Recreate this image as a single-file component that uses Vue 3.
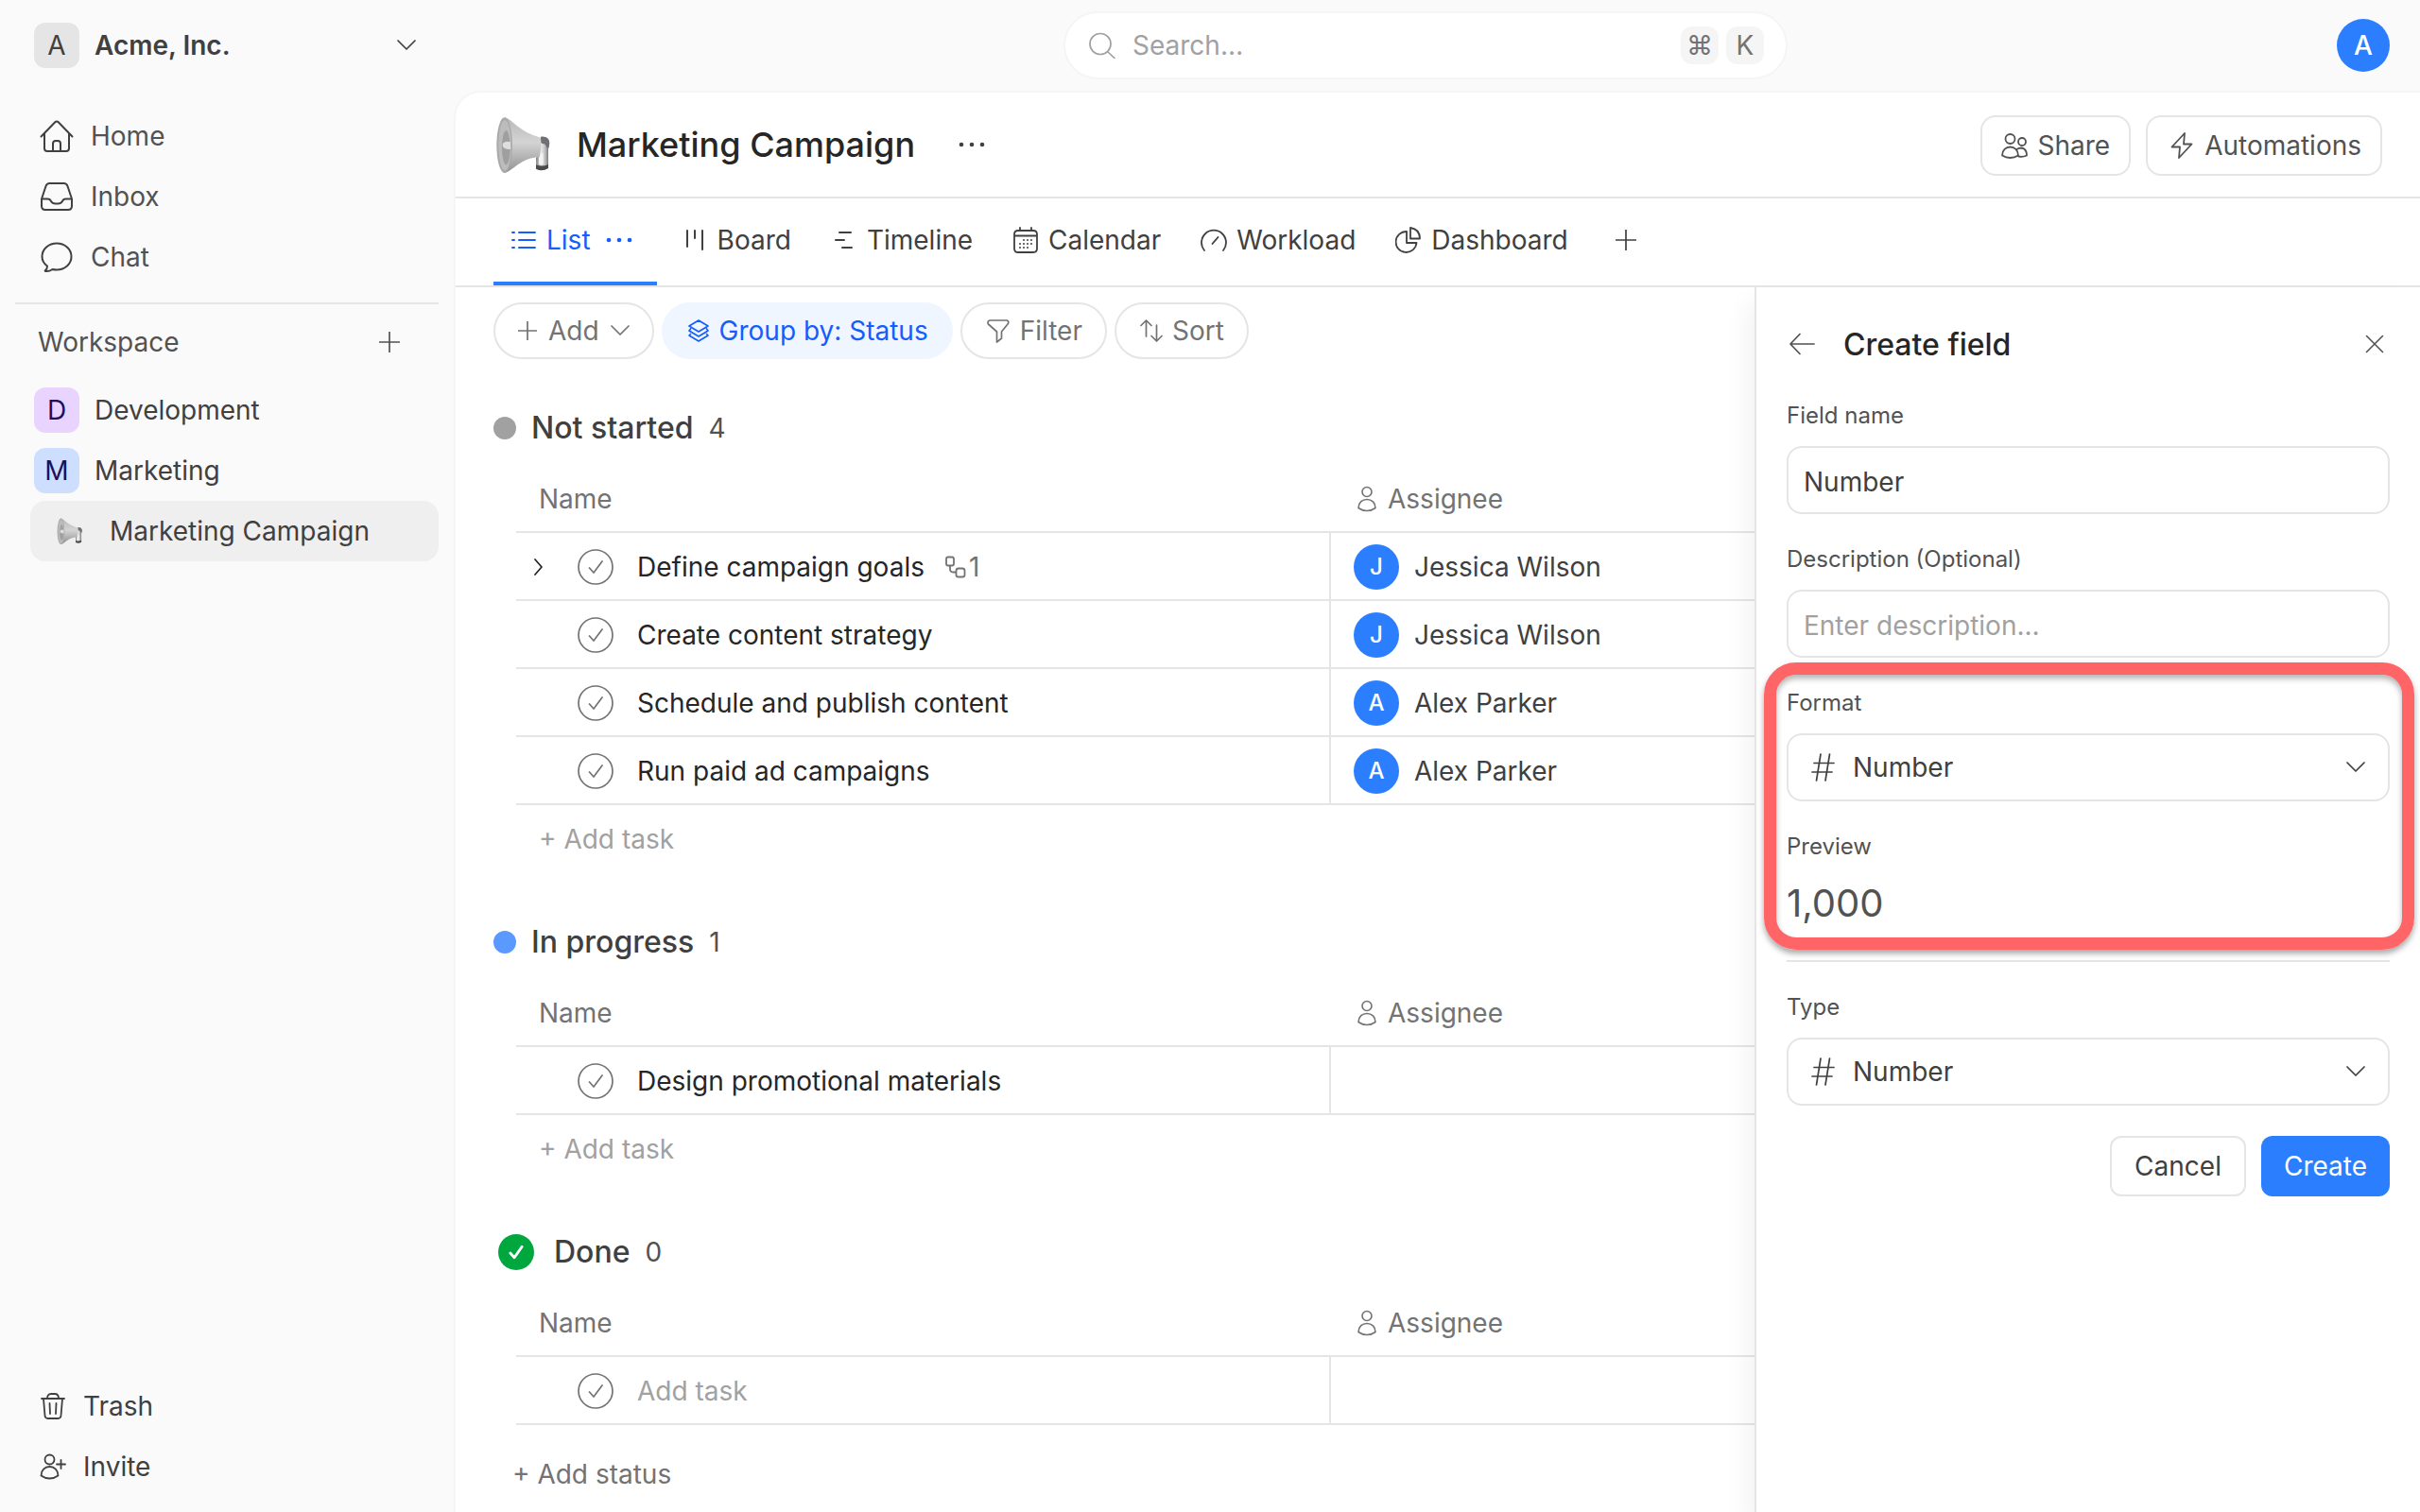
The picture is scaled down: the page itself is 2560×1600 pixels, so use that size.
<script setup>
import { h, ref } from 'vue'

const shapes = {
  home: [36, 36, 'M1.5 18.5 16 3.5q2-2 4 0l14.5 15M5 15.5V31q0 3 3 3h20q3 0 3-3V15.5M14 34v-8a3 3 0 0 1 3-3h2a3 3 0 0 1 3 3v8'],
  inbox: [36, 36, 'M2 20.5 6.5 7Q7.500 4 10.500 4h15q3 0 4 3L34 20.500V28q0 4-4 4H6q-4 0-4-4ZM2 20.500h6.500q2.500 0 3.500 2.500 1.500 2.500 4.500 2.500h3q3 0 4.500-2.500 1-2.500 3.500-2.500H34'],
  chat: [36, 36, 'M8 27.500C4.500 25 2.500 21.500 2.500 17.500 2.500 9.500 9.500 3.500 18 3.500s15.500 6 15.500 14-7 14-15.500 14q-2.500 0-4.500-.5-3.500 2.500-7.500 2-.7-.3 0-1 2-1.500 2-4.500Z'],
  chevron: [20, 12, 'm1 1 9 9 9-9', 1.7],
  chevronRight: [12, 20, 'm2 2 7 8-7 8', 1.8],
  plus: [22, 22, 'M11 0v22M0 11h22', 1.7],
  plusSmall: [20, 20, 'M10 0v20M0 10h20', 1.7],
  trash: [28, 28, 'M2 6h24M8 6q0-5 4-5h4q4 0 4 5M4 6l1.500 18q.3 3 3 3h11q2.700 0 3-3L24 6M10.500 11l.5 11M17.500 11l-.5 11', 1.8],
  invite: [28, 28, 'M15.500 6.500a5 5 0 1 1-10 0 5 5 0 0 1 10 0ZM1.500 23.500C1.500 18 5.500 14 10.500 14s9 4 9 9.500q-4 3-9 3t-9-3ZM18 11.500h9M22.500 7v9', 1.8],
  person: [20, 28, 'M15 6.500a5 5 0 1 1-10 0 5 5 0 0 1 10 0ZM1 23.500C1 18 5 14.500 10 14.500s9 3.500 9 9q-4 3-9 3t-9-3Z', 1.6],
  people: [28, 28, 'M14.500 7a5 5 0 1 1-10 0 5 5 0 0 1 10 0ZM1 24.500C1 19 5 15.500 9.500 15.500s8.500 3.500 8.500 9Q14 27 9.500 27T1 24.500ZM26 10a4 4 0 1 1-8 0 4 4 0 0 1 8 0ZM16.500 18q2-1.500 5-1.500 5.500 1 5.500 8-4 2-8.500 1', 1.8],
  bolt: [24, 28, 'M15 1 1.500 15.500H10L9 27l13.500-14.500H14Z', 1.8],
  list: [26, 20, 'M1 2h2M1 10h2M1 18h2M8 2h17M8 10h17M8 18h17'],
  board: [20, 22, 'M2 1v17M10 1v8M18 1v20'],
  timeline: [20, 20, 'M5 2h12M1 10h9M8 18h10'],
  calendar: [26, 28, 'M5 4h16q4 0 4 4v15q0 4-4 4H5q-4 0-4-4V8q0-4 4-4ZM1 9.500h24M7 1v3M19 1v3', 1.8],
  gauge: [28, 26, 'M4 24A13 13 0 1 1 24 24M12.500 17l6-7', 1.8],
  pie: [26, 28, 'M11 5A11 11 0 1 0 21.500 17H11ZM15 1v11.500h10Q25 2.500 15 1Z', 1.8],
  layers: [24, 24, 'M12 1 2 7l10 6 10-6ZM3.500 10 2 12l10 6 10-6-1.500-2M3.500 15.500 2 17l10 6 10-6-1.500-1.500', 1.7],
  filter: [30, 26, 'M6 2h18q3 1 1 4l-6.500 8v7l-5 4V14L4.500 6Q3 3 6 2Z', 1.7],
  sort: [24, 26, 'M6.500 19V2M1 7.500 6.500 2 12 7.500M17.500 7v17M12 18.500l5.500 5.500L23 18.500', 1.7],
  search: [28, 28, 'M23 12.500a11 11 0 1 1-22 0 11 11 0 0 1 22 0ZM19.500 20.500 27 27.500', 1.7],
  dots: [28, 6, ''],
  subtask: [22, 24, 'M3 1.500h4q2 0 2 2v5q0 2-2 2H3q-2 0-2-2v-5q0-2 2-2ZM14 13.500h4q2.500 0 2.500 2.500v4.500q0 2-2.500 2h-4q-2.500 0-2.500-2V16q0-2.500 2.500-2.500ZM5 10.500V14q0 3.500 3.500 3.500h3', 1.8],
  back: [30, 24, 'M29 12H4M14 1.500 4 12l10 10.500', 1.7],
  close: [20, 20, 'm1.500 1.500 17 17M18.500 1.500l-17 17', 1.6],
  hash: [26, 30, 'M3 10.500h21M1 20h21M10 1 5.500 29M19.500 1 15 29', 1.7],
  check: [38, 38, 'M37 19a18 18 0 1 1-36 0 18 18 0 0 1 36 0ZM12.500 20l4.500 5 9-12', 1.7]
}

const calendarDots = [[12, 14], [16, 14], [20, 14], [8, 18], [12, 18], [16, 18], [20, 18], [8, 22], [12, 22], [16, 22]]

const Icon = (props) => {
  const [w, ht, d, stroke = 2] = shapes[props.name]
  const circle = (cx, cy, r) => h('circle', { cx, cy, r, fill: 'currentColor', stroke: 'none' })
  const kids = props.name === 'dots'
    ? [3, 14, 25].map((cx) => circle(cx, 3, 2.3))
    : [h('path', { d })]
  if (props.name === 'calendar') kids.push(...calendarDots.map(([x, y]) => circle(x - 1, y, 1)))
  return h('svg', {
    width: w, height: ht, viewBox: `0 0 ${w} ${ht}`, fill: 'none', stroke: 'currentColor',
    'stroke-width': stroke, 'stroke-linejoin': 'round', 'stroke-linecap': 'round', 'aria-hidden': 'true'
  }, kids)
}
Icon.props = ['name']

const Megaphone = (props) => h('svg', { width: props.size, height: props.size, viewBox: '18 32 180 180', 'aria-hidden': 'true' }, [
  h('defs', null, [
    h('linearGradient', { id: 'horn' + props.size, x1: 0, y1: 0, x2: 0, y2: 1 }, [
      h('stop', { offset: 0, 'stop-color': '#b8b8b8' }),
      h('stop', { offset: 0.45, 'stop-color': '#d4d4d4' }),
      h('stop', { offset: 1, 'stop-color': '#909090' })
    ]),
    h('linearGradient', { id: 'grip' + props.size, x1: 0, y1: 0, x2: 1, y2: 0 }, [
      h('stop', { offset: 0, 'stop-color': '#77777b' }),
      h('stop', { offset: 0.35, 'stop-color': '#ededed' }),
      h('stop', { offset: 0.65, 'stop-color': '#c4c4c6' }),
      h('stop', { offset: 1, 'stop-color': '#66666a' })
    ])
  ]),
  h('path', { d: 'M168 98q24-4 27 14 2 14-3 24v60q-18 12-38 2l-1-34 15-14Z', fill: `url(#grip${props.size})` }),
  h('path', { d: 'M153 186q20 8 39-1v12q-20 12-39 2Z', fill: '#4a4a4d' }),
  h('path', { d: 'M162 150h14v34h-14Z', fill: '#f2f2f2' }),
  h('path', { d: 'M168 97q25-3 28 20-1 12-6 18l-8-14-14-4Z', fill: '#6f6f74' }),
  h('path', { d: 'M54 36c22 4 44 46 114 64q4 28-4 62c-60 2-84 44-110 50Z', fill: `url(#horn${props.size})` }),
  h('ellipse', { cx: 53, cy: 124, rx: 25, ry: 88, fill: '#a9a9a9' }),
  h('ellipse', { cx: 54, cy: 124, rx: 20, ry: 80, fill: '#bcbcbc' }),
  h('ellipse', { cx: 58, cy: 132, rx: 13, ry: 54, fill: '#9f9f9f' }),
  h('path', { d: 'M50 116q12-6 22-2v22q-10 4-22-4-6-8 0-16Z', fill: '#dedede' })
])
Megaphone.props = ['size']

const nav = [
  { icon: 'home', label: 'Home' },
  { icon: 'inbox', label: 'Inbox' },
  { icon: 'chat', label: 'Chat' }
]
const footer = [
  { icon: 'trash', label: 'Trash' },
  { icon: 'invite', label: 'Invite' }
]
const tabs = [
  { icon: 'list', label: 'List', active: true },
  { icon: 'board', label: 'Board' },
  { icon: 'timeline', label: 'Timeline' },
  { icon: 'calendar', label: 'Calendar' },
  { icon: 'gauge', label: 'Workload' },
  { icon: 'pie', label: 'Dashboard' }
]
const groups = [
  {
    name: 'Not started', tone: 'grey', tasks: [
      { title: 'Define campaign goals', who: 'Jessica Wilson', subtasks: 1 },
      { title: 'Create content strategy', who: 'Jessica Wilson' },
      { title: 'Schedule and publish content', who: 'Alex Parker' },
      { title: 'Run paid ad campaigns', who: 'Alex Parker' }
    ]
  },
  { name: 'In progress', tone: 'blue', tasks: [{ title: 'Design promotional materials' }] },
  { name: 'Done', tone: 'done', tasks: [] }
]

const fieldName = ref('Number')
const description = ref('')
const format = ref('Number')
const type = ref('Number')
</script>

<template>
  <div class="app">
    <aside class="sidebar">
      <button class="switcher" type="button">
        <span class="badge badge-grey">A</span>
        <span class="org">Acme, Inc.</span>
        <Icon name="chevron" />
      </button>

      <nav class="nav" aria-label="Main">
        <a v-for="n in nav" :key="n.label" href="#" class="nav-link">
          <Icon :name="n.icon" />{{ n.label }}
        </a>
      </nav>

      <div class="workspace-head">
        <span>Workspace</span>
        <button type="button" class="icon-btn" aria-label="Add workspace"><Icon name="plus" /></button>
      </div>
      <nav aria-label="Workspace">
        <a href="#" class="space"><span class="badge badge-purple">D</span>Development</a>
        <a href="#" class="space"><span class="badge badge-blue">M</span>Marketing</a>
        <a href="#" class="space-item"><Megaphone :size="28" />Marketing Campaign</a>
      </nav>

      <nav class="sidebar-foot" aria-label="Account">
        <a v-for="f in footer" :key="f.label" href="#" class="foot-link">
          <Icon :name="f.icon" />{{ f.label }}
        </a>
      </nav>
    </aside>

    <div class="content">
      <header class="topbar">
        <label class="search">
          <Icon name="search" />
          <input type="text" placeholder="Search…" aria-label="Search" />
          <kbd>⌘</kbd><kbd>K</kbd>
        </label>
        <button type="button" class="avatar avatar-lg" aria-label="Account A">A</button>
      </header>

      <main class="main">
        <div class="titlebar">
          <Megaphone :size="60" />
          <h1>Marketing Campaign</h1>
          <button type="button" class="icon-btn" aria-label="More"><Icon name="dots" /></button>
          <div class="title-actions">
            <button type="button" class="btn"><Icon name="people" />Share</button>
            <button type="button" class="btn btn-wide"><Icon name="bolt" />Automations</button>
          </div>
        </div>

        <nav class="tabs" aria-label="Views">
          <a v-for="t in tabs" :key="t.label" href="#" class="tab" :class="{ active: t.active }">
            <Icon :name="t.icon" class="tab-icon" /><span>{{ t.label }}</span>
            <Icon v-if="t.active" name="dots" class="tab-more" />
          </a>
          <button type="button" class="icon-btn tab-add" aria-label="Add view"><Icon name="plus" /></button>
        </nav>

        <div class="body">
          <section class="list">
            <div class="toolbar">
              <button type="button" class="pill pill-add"><Icon name="plusSmall" />Add<Icon name="chevron" /></button>
              <button type="button" class="pill pill-active"><Icon name="layers" class="pill-icon" />Group by: Status</button>
              <button type="button" class="pill"><Icon name="filter" class="pill-icon" />Filter</button>
              <button type="button" class="pill"><Icon name="sort" class="pill-icon" />Sort</button>
            </div>

            <section v-for="g in groups" :key="g.name" class="group">
              <div class="group-head">
                <span v-if="g.tone !== 'done'" class="dot" :class="g.tone"></span>
                <svg v-else class="done-mark" width="38" height="38" viewBox="0 0 40 40" aria-hidden="true">
                  <circle cx="20" cy="20" r="20" fill="#00a63e" />
                  <path d="m13.500 21 4.500 5 8.500-12" fill="none" stroke="#fff" stroke-width="3" stroke-linecap="round" stroke-linejoin="round" />
                </svg>
                <h2>{{ g.name }}</h2>
                <span class="count">{{ g.tasks.length }}</span>
              </div>
              <table class="tasks">
                <colgroup><col class="col-name" /><col /></colgroup>
                <thead>
                  <tr>
                    <th scope="col">Name</th>
                    <th scope="col" class="th-assignee"><div class="th-in"><Icon name="person" />Assignee</div></th>
                  </tr>
                </thead>
                <tbody>
                  <tr v-for="t in g.tasks" :key="t.title">
                    <td>
                      <div class="task">
                        <button type="button" class="expand" :disabled="!t.subtasks" aria-label="Expand">
                          <Icon v-if="t.subtasks" name="chevronRight" />
                        </button>
                        <button type="button" class="check" aria-label="Complete task"><Icon name="check" /></button>
                        <span>{{ t.title }}</span>
                        <span v-if="t.subtasks" class="subtasks"><Icon name="subtask" />{{ t.subtasks }}</span>
                      </div>
                    </td>
                    <td class="who">
                      <div v-if="t.who" class="person"><span class="avatar">{{ t.who[0] }}</span>{{ t.who }}</div>
                    </td>
                  </tr>
                  <tr v-if="!g.tasks.length">
                    <td>
                      <div class="task">
                        <span class="expand"></span>
                        <button type="button" class="check" aria-label="Complete task"><Icon name="check" /></button>
                        <input type="text" class="new-task" placeholder="Add task" aria-label="Task name" />
                      </div>
                    </td>
                    <td class="who"></td>
                  </tr>
                </tbody>
              </table>
              <button v-if="g.tasks.length" type="button" class="add-task">+ Add task</button>
            </section>
            <button type="button" class="add-status">+ Add status</button>
          </section>

          <form class="panel" @submit.prevent>
            <div class="panel-head">
              <button type="button" class="icon-btn" aria-label="Back"><Icon name="back" /></button>
              <h2>Create field</h2>
              <button type="button" class="icon-btn panel-close" aria-label="Close"><Icon name="close" /></button>
            </div>

            <div class="field">
              <label for="field-name">Field name</label>
              <input id="field-name" v-model="fieldName" type="text" class="control" />
            </div>
            <div class="field">
              <label for="field-desc">Description (Optional)</label>
              <input id="field-desc" v-model="description" type="text" class="control" placeholder="Enter description..." />
            </div>

            <div class="highlight">
              <div class="field">
                <label for="field-format">Format</label>
                <div class="select">
                  <Icon name="hash" class="select-icon" />
                  <select id="field-format" v-model="format" class="control"><option>Number</option></select>
                  <Icon name="chevron" class="select-arrow" />
                </div>
              </div>
              <div class="preview">
                <span class="label">Preview</span>
                <output for="field-format">1,000</output>
              </div>
            </div>

            <div class="field field-type">
              <label for="field-type">Type</label>
              <div class="select">
                <Icon name="hash" class="select-icon" />
                <select id="field-type" v-model="type" class="control"><option>Number</option></select>
                <Icon name="chevron" class="select-arrow" />
              </div>
            </div>

            <div class="panel-actions">
              <button type="button" class="action">Cancel</button>
              <button type="submit" class="action action-primary">Create</button>
            </div>
          </form>
        </div>
      </main>
    </div>
  </div>
</template>

<style>
body {
  background: #fafafa;
}
</style>

<style scoped>
.app,
.app * {
  box-sizing: border-box;
}
.app {
  display: flex;
  min-height: 100vh;
  background: #fafafa;
  color: #404040;
  font: 400 28px/40px Inter, "Liberation Sans", sans-serif;
  font-optical-sizing: none;
}
svg {
  display: block;
  flex: none;
}
a {
  color: inherit;
  text-decoration: none;
}
button,
input,
select {
  margin: 0;
  padding: 0;
  border: 0;
  background: none;
  color: inherit;
  font: inherit;
  font-optical-sizing: none;
  outline: 0;
}
button {
  cursor: pointer;
}
h1,
h2 {
  margin: 0;
  font-weight: 500;
}
.icon-btn {
  display: flex;
  align-items: center;
}

/* Sidebar */
.sidebar {
  display: flex;
  flex: none;
  flex-direction: column;
  width: 480px;
  padding-bottom: 16px;
}
.switcher {
  display: flex;
  align-items: center;
  height: 96px;
  padding: 0 40px 0 36px;
  gap: 16px;
}
.org {
  flex: 1;
  font-weight: 600;
  text-align: left;
}
.badge {
  display: grid;
  flex: none;
  place-items: center;
  width: 48px;
  height: 48px;
  border-radius: 12px;
  color: #1e0f5c;
}
.badge-grey {
  background: #e5e5e5;
  color: #404040;
}
.badge-purple {
  background: #e9d4ff;
}
.badge-blue {
  background: #cddeff;
}
.nav {
  margin: 0 16px;
  padding: 16px 0;
  border-bottom: 2px solid #e5e5e5;
}
.nav-link {
  display: flex;
  align-items: center;
  height: 64px;
  padding-left: 26px;
  gap: 18px;
  color: #525252;
}
.nav-link svg {
  color: #404040;
}
.workspace-head {
  display: flex;
  align-items: center;
  justify-content: space-between;
  height: 80px;
  padding: 0 57px 0 40px;
  color: #525252;
}
.space {
  display: flex;
  align-items: center;
  height: 64px;
  padding-left: 36px;
  gap: 16px;
}
.space-item {
  display: flex;
  align-items: center;
  height: 64px;
  margin: 0 16px 0 32px;
  padding-left: 27px;
  gap: 29px;
  border-radius: 16px;
  background: #efefef;
}
.sidebar-foot {
  margin-top: auto;
}
.foot-link {
  display: flex;
  align-items: center;
  height: 64px;
  padding-left: 42px;
  gap: 18px;
}

/* Top bar */
.content {
  display: flex;
  flex: 1;
  flex-direction: column;
  min-width: 0;
}
.topbar {
  display: grid;
  grid-template-columns: 1fr minmax(0, 766px) 1fr;
  align-items: center;
  height: 96px;
  padding: 0 32px 0 8px;
}
.search {
  display: flex;
  grid-column: 2;
  align-items: center;
  height: 72px;
  padding: 0 23px 0 25px;
  border: 2px solid #f5f5f5;
  border-radius: 36px;
  background: #fff;
  color: #a1a1a1;
}
.search input {
  flex: 1;
  min-width: 0;
  margin-left: 18px;
}
input::placeholder {
  color: #a1a1a1;
  opacity: 1;
}
kbd {
  display: grid;
  place-items: center;
  width: 40px;
  height: 40px;
  margin-left: 8px;
  border-radius: 12px;
  background: #f5f5f5;
  color: #737373;
  font: inherit;
}
.avatar {
  display: grid;
  flex: none;
  place-items: center;
  width: 48px;
  height: 48px;
  border-radius: 50%;
  background: #2b7fff;
  color: #fff;
  font-size: 24px;
  font-weight: 500;
}
.avatar-lg {
  justify-self: end;
  width: 56px;
  height: 56px;
  font-size: 28px;
}

/* Page header */
.main {
  display: flex;
  flex: 1;
  flex-direction: column;
  border: 2px solid #f5f5f5;
  border-width: 2px 0 0 2px;
  border-radius: 28px 0 0 0;
  background: #fff;
}
.titlebar {
  display: flex;
  align-items: center;
  height: 112px;
  padding: 0 40px;
  border-bottom: 2px solid #e5e5e5;
}
h1 {
  margin: 0 46px 0 28px;
  color: #262626;
  font-size: 36px;
  line-height: 48px;
}
.title-actions {
  display: flex;
  margin-left: auto;
  padding-top: 2px;
  gap: 16px;
}
.btn {
  display: flex;
  align-items: center;
  height: 64px;
  padding: 0 20px;
  gap: 10px;
  border: 2px solid #e5e5e5;
  border-radius: 16px;
  color: #525252;
}
.btn-wide {
  padding-left: 24px;
  gap: 12px;
}
.tabs {
  display: flex;
  height: 94px;
  padding-left: 40px;
  gap: 8px;
  border-bottom: 2px solid #e5e5e5;
}
.tab {
  display: flex;
  align-items: center;
  padding: 0 16px 4px 18px;
  gap: 10px;
}
.tab-icon {
  width: 28px;
}
.tab.active {
  padding-bottom: 0;
  border-bottom: 4px solid #2b7fff;
  color: #155dfc;
}
.tab-more {
  margin: 0 10px 0 6px;
}
.tab-add {
  padding: 0 26px 4px;
}

/* Task list */
.body {
  display: flex;
  flex: 1;
}
.list {
  flex: 1;
  min-width: 0;
  overflow: hidden;
  padding: 16px 0 8px 40px;
}
.toolbar {
  display: flex;
  gap: 8px;
}
.pill {
  display: flex;
  align-items: center;
  height: 60px;
  padding: 0 24px 0 23px;
  gap: 8px;
  border: 2px solid #e5e5e5;
  border-radius: 30px;
  color: #737373;
}
.pill-icon {
  min-width: 28px;
}
.pill-add {
  padding: 0 24px;
  gap: 12px;
}
.pill-active {
  border-color: #eff6ff;
  background: #eff6ff;
  color: #155dfc;
}
.group {
  padding-top: 48px;
}
.group-head {
  display: flex;
  align-items: center;
  height: 48px;
  margin-bottom: 16px;
  padding-top: 2px;
}
.dot {
  width: 24px;
  height: 24px;
  margin-right: 16px;
  border-radius: 50%;
}
.dot.grey {
  background: #a1a1a1;
}
.dot.blue {
  background: #5a99ff;
}
.done-mark {
  margin: 0 21px 0 5px;
}
h2 {
  font-size: 32px;
  line-height: 48px;
}
.count {
  margin-left: 16px;
  color: #525252;
}
.tasks {
  width: calc(100% - 24px);
  margin-left: 24px;
  border-spacing: 0;
  table-layout: fixed;
}
.col-name {
  width: 860px;
}
th,
td {
  height: 72px;
  padding: 2px 0 0;
  border-bottom: 2px solid #e5e5e5;
  text-align: left;
}
th {
  padding-left: 24px;
  color: #737373;
  font-weight: 400;
}
.th-assignee {
  padding-left: 30px;
}
.th-in {
  display: flex;
  align-items: center;
  gap: 12px;
}
.who {
  padding-left: 24px;
  border-left: 2px solid #e5e5e5;
}
.person {
  display: flex;
  align-items: center;
  gap: 16px;
}
.task {
  display: flex;
  align-items: center;
  color: #262626;
}
.expand {
  width: 48px;
  padding-left: 18px;
}
.check {
  margin: 0 25px 0 17px;
  color: #737373;
}
.subtasks {
  display: flex;
  align-items: center;
  margin-left: 22px;
  gap: 3px;
  color: #737373;
}
.new-task {
  flex: 1;
}
.add-task {
  display: block;
  height: 72px;
  margin-left: 48px;
  color: #a1a1a1;
}
.add-status {
  display: block;
  height: 56px;
  margin: 24px 0 0 20px;
  color: #737373;
}

/* Create field panel */
.panel {
  position: relative;
  display: flex;
  flex: none;
  flex-direction: column;
  width: 704px;
  padding: 32px;
  gap: 32px;
  border-left: 2px solid #e5e5e5;
  background: #fff;
  box-shadow: -8px 16px 24px rgb(0 0 0 / 5%);
}
.panel-head {
  display: flex;
  align-items: center;
  height: 56px;
  color: #525252;
}
.panel-head h2 {
  margin-left: 30px;
  padding-top: 2px;
  color: #262626;
}
.panel-close {
  margin: 0 6px 0 auto;
}
.field,
.preview {
  display: flex;
  flex-direction: column;
}
.field {
  gap: 16px;
}
.field label,
.label {
  color: #525252;
  font-size: 24px;
  line-height: 32px;
}
.control {
  width: 100%;
  height: 72px;
  padding: 4px 16px 0;
  border: 2px solid #e5e5e5;
  border-radius: 16px;
  background: #fff;
}
.select {
  position: relative;
}
select.control {
  padding: 0 64px 0 68px;
  appearance: none;
}
.select-icon,
.select-arrow {
  position: absolute;
  top: 21px;
  left: 26px;
  pointer-events: none;
}
.select-arrow {
  top: 30px;
  right: 26px;
  left: auto;
}
.highlight {
  position: relative;
  display: flex;
  flex-direction: column;
  gap: 32px;
}
.highlight::after {
  position: absolute;
  inset: -27px -26px -21px -24px;
  border: 13px solid #ff6467;
  border-radius: 34px;
  box-shadow: 0 4px 6px rgb(0 0 0 / 35%), inset 0 4px 6px rgb(0 0 0 / 30%);
  content: "";
  pointer-events: none;
}
.preview {
  gap: 16px;
}
output {
  color: #525252;
  font-size: 40px;
  line-height: 56px;
}
.field-type {
  padding-top: 32px;
  border-top: 2px solid #e5e5e5;
}
.panel-actions {
  display: flex;
  justify-content: flex-end;
  gap: 16px;
}
.action {
  height: 64px;
  padding: 0 24px;
  border: 2px solid #e5e5e5;
  border-radius: 12px;
}
.action-primary {
  border: 0;
  background: #2b7fff;
  color: #fff;
}
</style>
